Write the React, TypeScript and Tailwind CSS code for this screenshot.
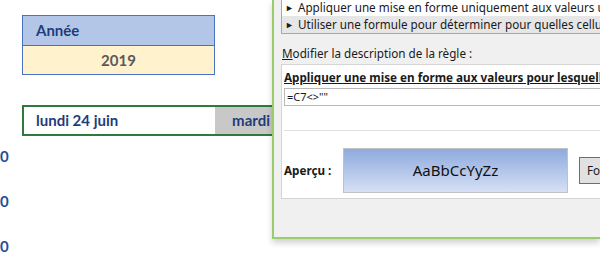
const cellFont = "font-['Lato','Liberation_Sans',sans-serif]";
const uiFont = "font-['Noto_Sans','Liberation_Sans',sans-serif]";

function Sheet() {
  return (
    <div className={`${cellFont} flex w-[272px] shrink-0 flex-col font-bold`}>
      <div className="ml-[22px] mt-[15px] w-[193px] border border-[#4a72c0]">
        <div className="flex h-[29px] items-center bg-[#b4c6e7] pl-[13px] text-[15px] text-[#1f3d7a]">Année</div>
        <div className="flex h-[29px] items-center justify-center border-t border-[#4a72c0] bg-[#fff2cc] text-[15px] text-[#5a5a5a]">
          2019
        </div>
      </div>
      <div className="ml-[22px] mt-[30px] flex h-[31px] border-y-2 border-l-2 border-[#2e7a3c] text-[15px] text-[#1f3d7a]">
        <div className="flex w-[191px] items-center pl-[12px]">lundi 24 juin</div>
        <div className="flex flex-1 items-center justify-end bg-[#c8c8c8] pr-[2px]">mardi</div>
      </div>
      <div className="mt-[11px] flex flex-col gap-[26px] text-[15px] leading-[19px] text-[#1f4e9a]">
        <span>0</span>
        <span>0</span>
        <span>0</span>
      </div>
    </div>
  );
}

function Dialog() {
  return (
    <div className={`${uiFont} flex h-[239px] min-w-0 flex-1 flex-col overflow-hidden border-b-2 border-l-2 border-[#98cc6c] bg-[#f0f0f0] pl-[7px] text-[11.7px] text-[#1a1a1a] shadow-[0_4px_6px_rgba(0,0,0,0.18)]`}>
      <div className="mt-[-1px] w-[420px] shrink-0 border-b border-l border-[#a8a8a8] bg-white">
        <div className="flex h-[17px] items-center gap-[4px] whitespace-nowrap pl-[3px]">
          <span className="text-[9px]">►</span>
          <span>Appliquer une mise en forme uniquement aux valeurs uniques</span>
        </div>
        <div className="flex h-[17px] items-center gap-[4px] whitespace-nowrap bg-[#e6e6e6] pl-[3px]">
          <span className="text-[9px]">►</span>
          <span>Utiliser une formule pour déterminer pour quelles cellules</span>
        </div>
      </div>
      <div className="mt-[10px] whitespace-nowrap pl-[1px] leading-[18px]">
        <span className="underline">M</span>odifier la description de la règle :
      </div>
      <div className="mt-[2px] flex h-[135px] w-[420px] shrink-0 flex-col border border-[#d4d4d4] bg-white pl-[2px]">
        <div className="mt-[3px] whitespace-nowrap font-bold leading-[18px] underline">
          Appliquer une mise en forme aux valeurs pour lesquelles
        </div>
        <div className="mt-[2px] flex h-[18px] items-center border border-[#b8b8b8] pl-[2px] text-[11px]">=C7&lt;&gt;""</div>
        <div className="mt-[24px] border-t border-[#e0e0e0]" />
        <div className="mt-[17px] flex items-center">
          <span className="w-[59px] shrink-0 font-bold">Aperçu :</span>
          <div className="flex h-[45px] w-[225px] shrink-0 items-center justify-center border border-[#c2c2c2] bg-gradient-to-b from-[#8faadc] to-[#d6e0f5] text-[15px] text-[#111]">
            AaBbCcYyZz
          </div>
          <div className="ml-[11px] flex h-[27px] w-[80px] shrink-0 items-center border border-[#2f7bd1] bg-[#e1e1e1] pl-[7px]">
            Format...
          </div>
        </div>
      </div>
    </div>
  );
}

export default function App() {
  return (
    <div className="flex h-[270px] w-[600px] items-start overflow-hidden bg-white">
      <Sheet />
      <Dialog />
    </div>
  );
}
